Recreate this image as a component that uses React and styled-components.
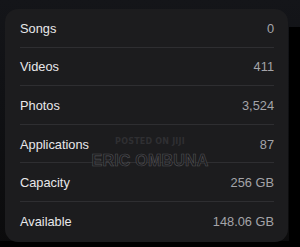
import React from "react";
import styled, { createGlobalStyle } from "styled-components";

const Global = createGlobalStyle`
  html, body { margin: 0; padding: 0; background: #0c0d0f; }
  body { font-family: "Liberation Sans", Arial, sans-serif; }
`;

const Page = styled.div`
  width: 300px;
  height: 247px;
  box-sizing: border-box;
  padding: 9px 12px 0 5px;
  overflow: hidden;
  background:
    linear-gradient(#000, #000) 289px 27px / 11px 220px no-repeat,
    linear-gradient(#000, #000) 0 241px / 300px 6px no-repeat,
    linear-gradient(180deg, #141519 0%, #101114 40%, #0b0b0c 100%);
`;

const Card = styled.div`
  position: relative;
  width: 283px;
  background: #1c1c1e;
  border-radius: 13px;
  display: flex;
  flex-direction: column;
  padding-bottom: 1px;
`;

const Row = styled.div`
  position: relative;
  height: 38.6px;
  display: flex;
  align-items: center;
  justify-content: space-between;
  padding: 0 14px 0 15px;
  font-size: 12.8px;
  &::after {
    content: "";
    display: ${(p) => (p.$last ? "none" : "block")};
    position: absolute;
    left: 15px;
    right: 14px;
    bottom: 0;
    height: 1px;
    background: #2e2e31;
  }
`;

const Label = styled.span`
  color: #e8e8ea;
`;

const Value = styled.span`
  color: #a4a4a9;
`;

const Watermark = styled.div`
  position: absolute;
  left: 84px;
  top: 128px;
  width: 122px;
  display: flex;
  flex-direction: column;
  align-items: center;
  gap: 6px;
  pointer-events: none;
`;

const Posted = styled.span`
  font-family: "DejaVu Sans", sans-serif;
  font-weight: bold;
  font-size: 8px;
  color: #2f2f32;
  letter-spacing: 0.2px;
`;

const Name = styled.span`
  font-family: "Liberation Sans", Arial, sans-serif;
  font-weight: bold;
  font-size: 16px;
  color: #1c1c1e;
  -webkit-text-stroke: 0.6px #505055;
  letter-spacing: 0.2px;
`;

const rows = [
  ["Songs", "0"],
  ["Videos", "411"],
  ["Photos", "3,524"],
  ["Applications", "87"],
  ["Capacity", "256 GB"],
  ["Available", "148.06 GB"],
];

export default function App() {
  return (
    <>
      <Global />
      <Page>
        <Card>
          {rows.map(([l, v], i) => (
            <Row key={l} $last={i === rows.length - 1}>
              <Label>{l}</Label>
              <Value>{v}</Value>
            </Row>
          ))}
          <Watermark>
            <Posted>POSTED ON JIJI</Posted>
            <Name>ERIC OMBUNA</Name>
          </Watermark>
        </Card>
      </Page>
    </>
  );
}
